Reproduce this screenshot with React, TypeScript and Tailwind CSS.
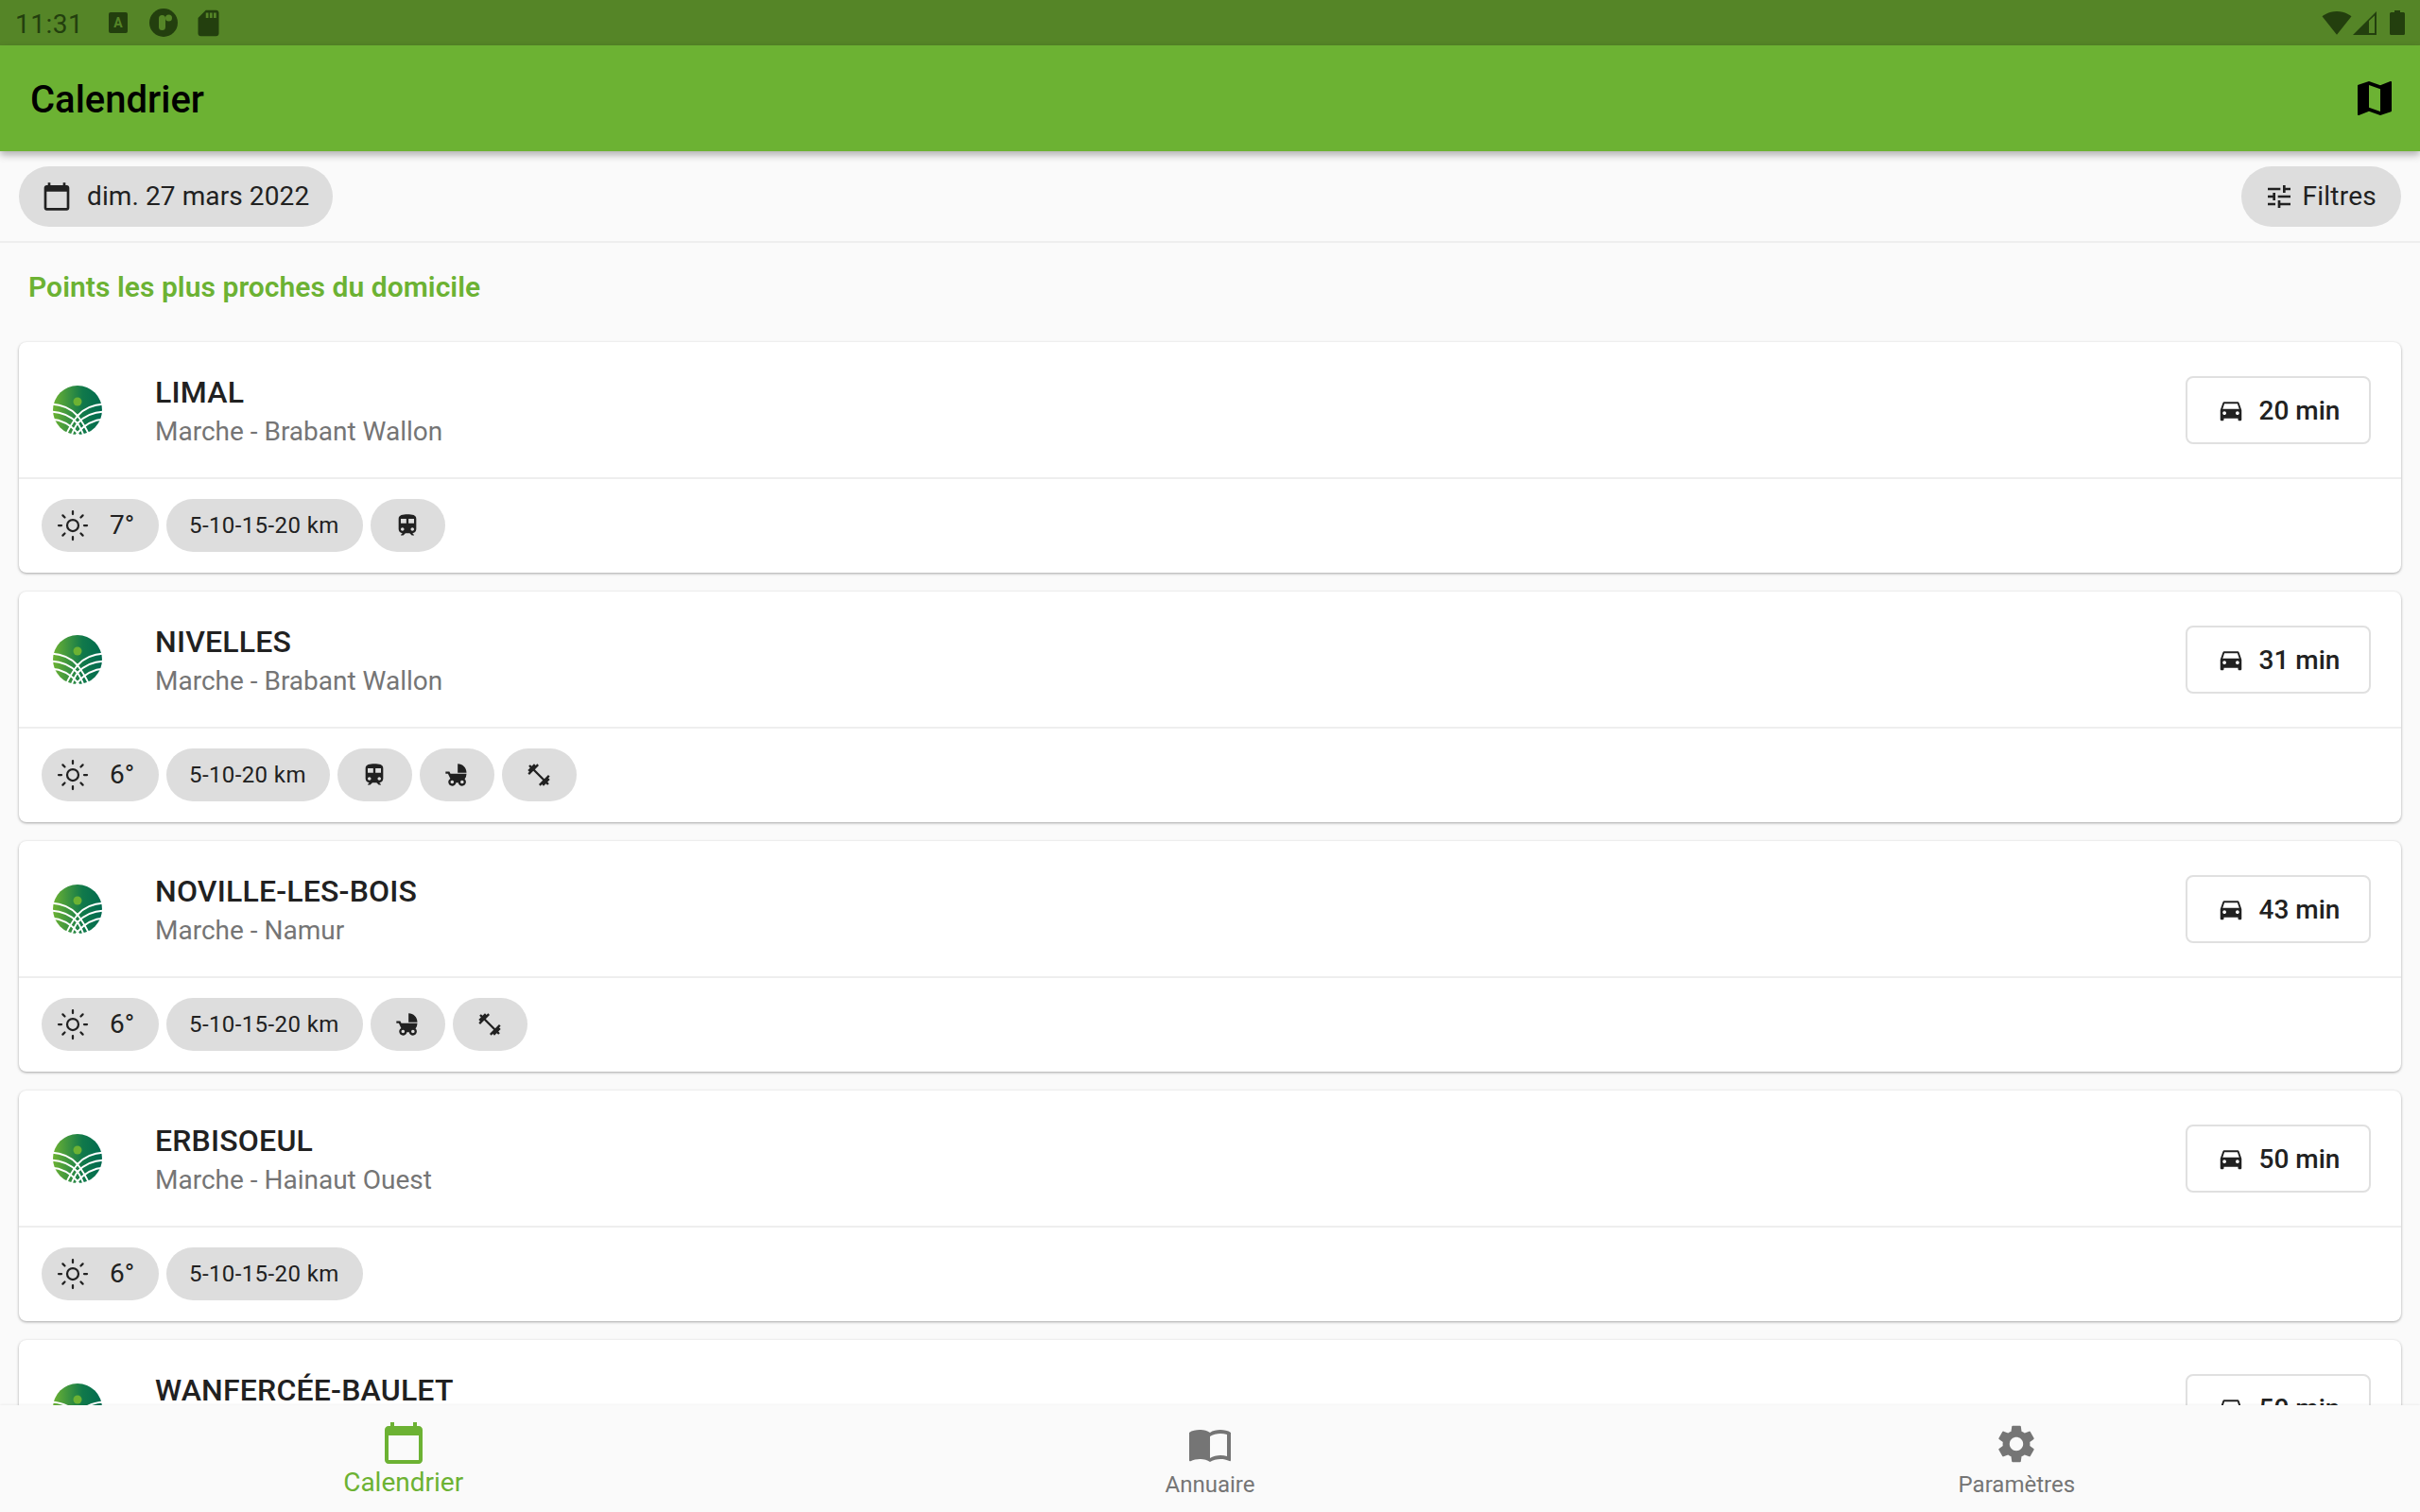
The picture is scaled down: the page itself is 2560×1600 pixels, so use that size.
import { useId } from "react";
import { Sun } from "lucide-react";
import {
  MdCalendarToday,
  MdChildFriendly,
  MdDirectionsCar,
  MdFitnessCenter,
  MdImportContacts,
  MdMap,
  MdSdCard,
  MdSettings,
  MdSignalWifi4Bar,
  MdTrain,
  MdTune,
} from "react-icons/md";

type Market = {
  name: string;
  region: string;
  minutes: number;
  temp: number;
  distance: string;
  train?: boolean;
  stroller?: boolean;
  fitness?: boolean;
};

const markets: Market[] = [
  { name: "LIMAL", region: "Marche - Brabant Wallon", minutes: 20, temp: 7, distance: "5-10-15-20 km", train: true },
  { name: "NIVELLES", region: "Marche - Brabant Wallon", minutes: 31, temp: 6, distance: "5-10-20 km", train: true, stroller: true, fitness: true },
  { name: "NOVILLE-LES-BOIS", region: "Marche - Namur", minutes: 43, temp: 6, distance: "5-10-15-20 km", stroller: true, fitness: true },
  { name: "ERBISOEUL", region: "Marche - Hainaut Ouest", minutes: 50, temp: 6, distance: "5-10-15-20 km" },
  { name: "WANFERCÉE-BAULET", region: "Marche - Namur", minutes: 50, temp: 6, distance: "5-10-15-20 km" },
];

// white lattice over the gradient disc, left half then mirrored
const logoLines = "M-1 21.5C10 22 21 26 28 34C32 39 37 47 41 56M-1 29.5C10 30 20 33 28 42C31 46 33 51 35 56M-1 37.5C10 38 20 43 28 52L30 56";

function Logo() {
  const id = useId();
  return (
    <svg viewBox="0 0 56 56" className="h-14 w-14 shrink-0">
      <defs>
        <linearGradient id={id} x1="0" x2="1" y1="0" y2="0">
          <stop offset="0" stopColor="#6cb233" />
          <stop offset="0.6" stopColor="#11794a" />
          <stop offset="1" stopColor="#006a50" />
        </linearGradient>
      </defs>
      <circle cx="28" cy="28" r="26" fill={`url(#${id})`} />
      <path d={logoLines} fill="none" stroke="#fff" strokeWidth="2" />
      <path d={logoLines} fill="none" stroke="#fff" strokeWidth="2" transform="matrix(-1 0 0 1 56 0)" />
      <circle cx="28" cy="19" r="4.5" fill="#6cb233" />
    </svg>
  );
}

function Chip({ children, className }: { children: React.ReactNode; className: string }) {
  return (
    <div className={`flex h-14 items-center rounded-full bg-[#dddddd] text-[#212121] ${className}`}>
      {children}
    </div>
  );
}

function MarketCard({ market }: { market: Market }) {
  return (
    <div className="shrink-0 rounded-[8px] bg-white shadow-[0_1px_3px_rgba(0,0,0,0.35)]">
      <div className="flex h-[145px] items-center border-b-2 border-[#eeeeee] pl-[34px] pr-[32px]">
        <Logo />
        <div className="ml-[54px] flex-1 pt-[4px]">
          <div className="text-[32px] leading-[42px] font-medium tracking-[0.2px] text-[#212121]">{market.name}</div>
          <div className="text-[28px] leading-[42px] text-[#757575]">{market.region}</div>
        </div>
        <div className="flex h-[72px] w-[196px] items-center justify-center gap-[15px] rounded-[8px] border-2 border-[#e0e0e0] text-[28px] font-medium text-[#212121]">
          <MdDirectionsCar size={30} />
          <span className="pt-[2px]">{market.minutes} min</span>
        </div>
      </div>
      <div className="flex h-[99px] items-start gap-[8px] pl-[24px] pt-[21px]">
        <Chip className="w-[124px] gap-[21px] pl-[15px]">
          <Sun size={36} strokeWidth={1.5} />
          <span className="text-[28px]">{market.temp}°</span>
        </Chip>
        <Chip className="pl-[24px] pr-[25px] text-[24px] tracking-[0.4px]">{market.distance}</Chip>
        {market.train && (
          <Chip className="w-[79px] justify-center">
            <MdTrain size={28} />
          </Chip>
        )}
        {market.stroller && (
          <Chip className="w-[79px] justify-center">
            <MdChildFriendly size={28} />
          </Chip>
        )}
        {market.fitness && (
          <Chip className="w-[79px] justify-center">
            <MdFitnessCenter size={28} />
          </Chip>
        )}
      </div>
    </div>
  );
}

export default function App() {
  return (
    <div className="flex h-[1600px] w-[2560px] flex-col overflow-hidden bg-[#fafafa] font-['Roboto',sans-serif]">
      <div className="flex h-12 shrink-0 items-center bg-[#558527] pl-[16px] pr-[16px] text-[#233f0e]">
        <span className="w-[99px] pt-[3px] text-[28px] leading-none tracking-[0.5px]">11:31</span>
        <div className="mr-[23px] flex h-[22px] w-[20px] items-center justify-center rounded-[2px] bg-[#233f0e]">
          <span className="text-[14px] leading-none font-bold text-[#558527]">A</span>
        </div>
        <svg viewBox="0 0 30 30" className="mr-[16px] h-[30px] w-[30px]">
          <circle cx="15" cy="15" r="15" fill="currentColor" />
          <rect x="10" y="7" width="7" height="16" rx="3.5" fill="#558527" />
          <circle cx="20.5" cy="10" r="3.5" fill="#558527" />
        </svg>
        <MdSdCard size={33} />
        <div className="flex-1" />
        <MdSignalWifi4Bar size={32} />
        <svg viewBox="0 0 25 25" className="ml-[1px] h-[25px] w-[25px]">
          <path d="M0 25L25 0V25Z M17 10V23H23V4.5Z" fill="currentColor" fillRule="evenodd" />
        </svg>
        <svg viewBox="0 0 16 26" className="ml-[14px] h-[26px] w-[16px]">
          <path d="M5 0H11V2H14.5Q16 2 16 3.5V24.5Q16 26 14.5 26H1.5Q0 26 0 24.5V3.5Q0 2 1.5 2H5Z" fill="currentColor" />
        </svg>
      </div>

      <div className="relative z-10 flex h-[112px] shrink-0 items-center justify-between bg-[#6cb233] pl-[32px] pr-[24px] shadow-[0_4px_8px_rgba(0,0,0,0.3)]">
        <h1 className="pt-[3px] text-[40px] font-medium text-black">Calendrier</h1>
        <MdMap size={48} className="text-black" />
      </div>

      <div className="flex h-[97px] shrink-0 items-center justify-between border-b-2 border-[#eeeeee] px-[20px] pt-[1px]">
        <div className="flex h-16 items-center gap-[16px] rounded-full bg-[#dddddd] pl-[24px] pr-[25px] text-[28px] tracking-[0.1px] text-[#212121]">
          <MdCalendarToday size={32} />
          <span>dim. 27 mars 2022</span>
        </div>
        <div className="flex h-16 items-center gap-[8px] rounded-full bg-[#dddddd] pl-[24px] pr-[26px] text-[28px] tracking-[0.25px] text-[#212121]">
          <MdTune size={32} />
          <span>Filtres</span>
        </div>
      </div>

      <main className="flex min-h-0 flex-1 flex-col gap-[20px] overflow-hidden px-[20px]">
        <h2 className="-mb-[20px] h-[105px] shrink-0 pl-[10px] pt-[27px] text-[30px] leading-[40px] font-semibold tracking-[0.05px] text-[#6cb233]">
          Points les plus proches du domicile
        </h2>
        {markets.map((m) => (
          <MarketCard key={m.name} market={m} />
        ))}
      </main>

      <nav className="relative z-10 grid h-[113px] shrink-0 grid-cols-3 bg-[#fafafa] shadow-[0_-1px_2px_rgba(0,0,0,0.05)]">
        <div className="flex flex-col items-center pt-[16px] text-[#6cb233]">
          <MdCalendarToday size={48} />
          <span className="pt-[1px] text-[28px] leading-[34px]">Calendrier</span>
        </div>
        <div className="flex flex-col items-center pt-[17px] text-[#757575]">
          <MdImportContacts size={48} />
          <span className="mt-[3px] text-[24px] leading-[32px]">Annuaire</span>
        </div>
        <div className="flex flex-col items-center pt-[17px] text-[#757575]">
          <MdSettings size={48} />
          <span className="mt-[3px] text-[24px] leading-[32px]">Paramètres</span>
        </div>
      </nav>
    </div>
  );
}
